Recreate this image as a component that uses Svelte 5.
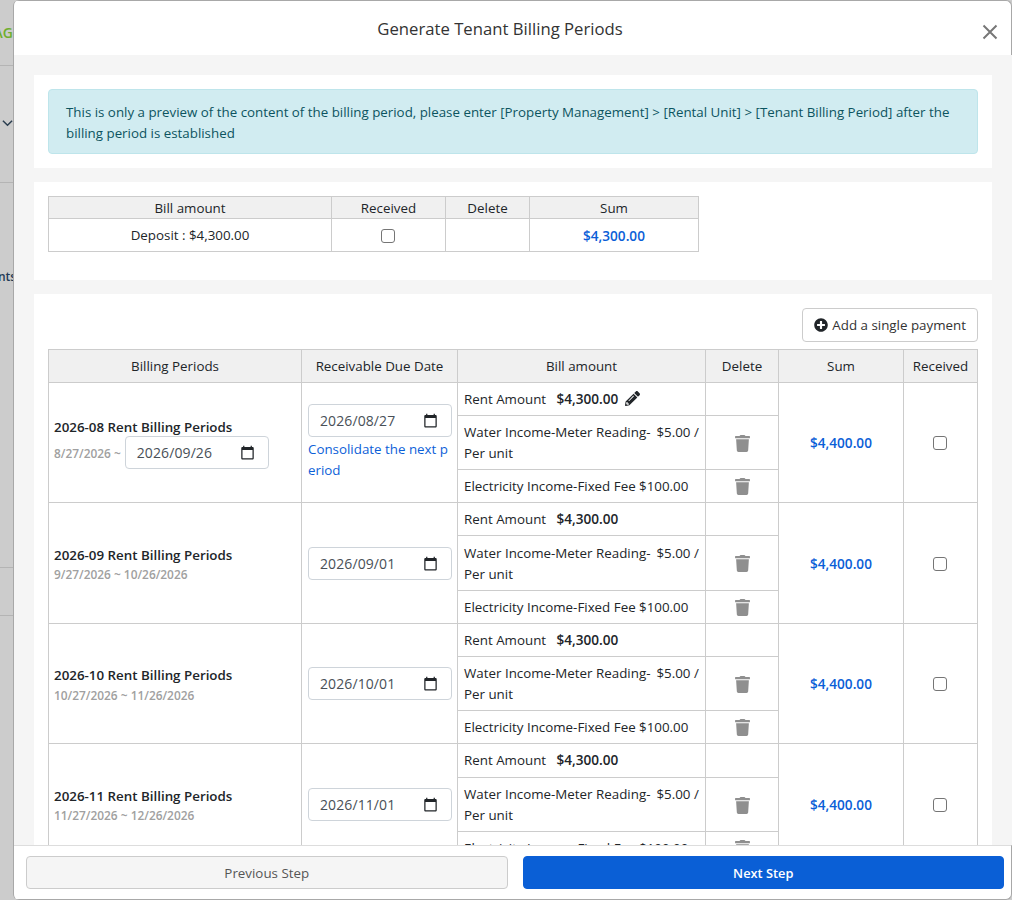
<script>
	const periods = [
		{ title: '2026-08 Rent Billing Periods', from: '8/27/2026', due: '2026/08/27', end: '2026/09/26', first: true },
		{ title: '2026-09 Rent Billing Periods', from: '9/27/2026', to: '10/26/2026', due: '2026/09/01' },
		{ title: '2026-10 Rent Billing Periods', from: '10/27/2026', to: '11/26/2026', due: '2026/10/01' },
		{ title: '2026-11 Rent Billing Periods', from: '11/27/2026', to: '12/26/2026', due: '2026/11/01' }
	]
</script>

{#snippet calendar()}
	<svg class="cal" viewBox="0 0 24 24"><path d="M20 3h-1V1h-2v2H7V1H5v2H4c-1.1 0-2 .9-2 2v16c0 1.1.9 2 2 2h16c1.1 0 2-.9 2-2V5c0-1.1-.9-2-2-2zm0 18H4V8h16v13z" /></svg>
{/snippet}

{#snippet trash()}
	<svg class="trash" viewBox="0 0 448 512"><path d="M432 32H312l-9.4-18.7A24 24 0 0 0 281.1 0H166.8a23.72 23.72 0 0 0-21.4 13.3L136 32H16A16 16 0 0 0 0 48v32a16 16 0 0 0 16 16h416a16 16 0 0 0 16-16V48a16 16 0 0 0-16-16zM53.2 467a48 48 0 0 0 47.9 45h245.8a48 48 0 0 0 47.9-45L416 128H32z" /></svg>
{/snippet}

<div class="page">
	<aside class="behind">
		<div class="nav nav-brand"><span class="brand">AG</span></div>
		<div class="nav nav-menu"><svg class="chev" viewBox="0 0 12 8"><path d="M1 1.5l5 5 5-5" /></svg></div>
		<div class="nav nav-label"><span class="label">nts</span></div>
		<div class="nav nav-gap"></div>
	</aside>

	<section class="modal">
		<header>
			<h2>Generate Tenant Billing Periods</h2>
			<svg class="close" viewBox="0 0 16 16"><path d="M1.5 1.5l13 13M14.5 1.5l-13 13" /></svg>
		</header>

		<div class="body">
			<div class="panel">
				<div class="alert">
					This is only a preview of the content of the billing period, please enter [Property Management] &gt; [Rental Unit] &gt; [Tenant Billing Period] after the billing period is established
				</div>
			</div>

			<div class="panel deposit">
				<table class="small">
					<colgroup>
						<col style="width:283px" />
						<col style="width:114px" />
						<col style="width:84px" />
						<col style="width:169px" />
					</colgroup>
					<thead>
						<tr><th>Bill amount</th><th>Received</th><th>Delete</th><th>Sum</th></tr>
					</thead>
					<tbody>
						<tr>
							<td class="center">Deposit : $4,300.00</td>
							<td class="center"><input type="checkbox" /></td>
							<td></td>
							<td class="center sum">$4,300.00</td>
						</tr>
					</tbody>
				</table>
			</div>

			<div class="panel list">
				<div class="actions">
					<button class="add">
						<svg viewBox="0 0 512 512"><path d="M256 8C119 8 8 119 8 256s111 248 248 248 248-111 248-248S393 8 256 8zm144 276c0 6.6-5.4 12-12 12h-92v92c0 6.6-5.4 12-12 12h-56c-6.6 0-12-5.4-12-12v-92h-92c-6.6 0-12-5.4-12-12v-56c0-6.6 5.4-12 12-12h92v-92c0-6.6 5.4-12 12-12h56c6.6 0 12 5.4 12 12v92h92c6.6 0 12 5.4 12 12v56z" /></svg>
						Add a single payment
					</button>
				</div>
				<table class="periods">
					<colgroup>
						<col style="width:253px" />
						<col style="width:156px" />
						<col style="width:248px" />
						<col style="width:73px" />
						<col style="width:125px" />
						<col style="width:74px" />
					</colgroup>
					<thead>
						<tr>
							<th>Billing Periods</th>
							<th>Receivable Due Date</th>
							<th>Bill amount</th>
							<th>Delete</th>
							<th>Sum</th>
							<th>Received</th>
						</tr>
					</thead>
					<tbody>
						{#each periods as p, i}
							<tr>
								<td rowspan="3" class="period" class:first={p.first}>
									<strong>{p.title}</strong>
									{#if p.first}
										<div class="range">
											<span>{p.from} ~</span>
											<span class="date">{p.end}{@render calendar()}</span>
										</div>
									{:else}
										<div class="range">{p.from} ~ {p.to}</div>
									{/if}
								</td>
								<td rowspan="3" class="due">
									<span class="date">{p.due}{@render calendar()}</span>
									{#if p.first}
										<a class="merge" href="#top">Consolidate the next period</a>
									{/if}
								</td>
								<td class="rent" class:tall={i === 3} class:nudge={i === 1}>
									Rent Amount <strong>$4,300.00</strong>
									{#if p.first}
										<svg class="pencil" viewBox="0 0 512 512"><path d="M497.9 142.1l-46.1 46.1c-4.7 4.7-12.3 4.7-17 0l-111-111c-4.7-4.7-4.7-12.3 0-17l46.1-46.1c18.7-18.7 49.1-18.7 67.9 0l60.1 60.1c18.8 18.7 18.8 49.1 0 67.9zM284.2 99.8L21.6 362.4.4 483.9c-2.9 16.4 11.4 30.6 27.8 27.8l121.5-21.3 262.6-262.6c4.7-4.7 4.7-12.3 0-17l-111-111c-4.8-4.7-12.4-4.7-17.1 0zM124.1 339.9c-5.5-5.5-5.5-14.3 0-19.8l154-154c5.5-5.5 14.3-5.5 19.8 0s5.5 14.3 0 19.8l-154 154c-5.5 5.5-14.3 5.5-19.8 0zM88 424h48v36.3l-64.5 11.3-31.1-31.1L51.7 376H88v48z" /></svg>
									{/if}
								</td>
								<td></td>
								<td rowspan="3" class="center sum">$4,400.00</td>
								<td rowspan="3" class="center"><input type="checkbox" /></td>
							</tr>
							<tr>
								<td class="water" class:tall={i === 1}>Water Income-Meter Reading- <span class="price">$5.00 /</span> Per unit</td>
								<td class="center">{@render trash()}</td>
							</tr>
							<tr>
								<td class:nudge={i !== 1}>Electricity Income-Fixed Fee $100.00</td>
								<td class="center">{@render trash()}</td>
							</tr>
						{/each}
					</tbody>
				</table>
			</div>
		</div>

		<footer>
			<button class="prev">Previous Step</button>
			<button class="next">Next Step</button>
		</footer>
	</section>
</div>

<style>
	:global(body) {
		overflow: hidden;
		background: #ccc;
	}
	.page {
		display: flex;
		height: 900px;
		font-family: 'Open Sans', 'Noto Sans', sans-serif;
		font-size: 13.35px;
		line-height: 21px;
		color: #212529;
	}
	.behind {
		width: 13px;
		flex: none;
		overflow: hidden;
	}
	.nav {
		width: 13px;
		display: flex;
		border-bottom: 1px solid #b4b4b4;
		box-sizing: border-box;
	}
	.nav-brand {
		height: 66px;
		padding-top: 22px;
		justify-content: flex-end;
	}
	.brand {
		color: #6fae2c;
		font-weight: 600;
		font-size: 14px;
	}
	.nav-menu {
		height: 117px;
		padding-top: 53px;
		justify-content: flex-end;
	}
	.chev {
		width: 11px;
		height: 8px;
		flex: none;
		fill: none;
		stroke: #2b3e50;
		stroke-width: 1.6;
	}
	.nav-label {
		height: 385px;
		padding-top: 83px;
	}
	.label {
		margin-left: -2px;
		color: #1f3a56;
		font-weight: 600;
		font-size: 12px;
		white-space: nowrap;
		height: 21px;
	}
	.nav-gap {
		height: 48px;
	}
	.modal {
		flex: 1;
		display: flex;
		flex-direction: column;
		border-left: 1px solid #a8a8a8;
		border-radius: 6px 0 0 6px;
		box-sizing: border-box;
		overflow: hidden;
		min-width: 0;
	}
	header {
		height: 55px;
		box-sizing: border-box;
		flex: none;
		position: relative;
		display: flex;
		align-items: center;
		justify-content: center;
		padding-right: 25px;
		background: #fff;
		border-top: 1px solid #a8a8a8;
		border-right: 1px solid #a8a8a8;
		border-top-right-radius: 6px;
	}
	h2 {
		margin: 0;
		font-size: 16.7px;
		font-weight: 400;
		color: #333;
	}
	.close {
		position: absolute;
		top: 23px;
		right: 13px;
		width: 16px;
		height: 16px;
		fill: none;
		stroke: #777;
		stroke-width: 2;
	}
	.body {
		flex: 1;
		min-height: 0;
		overflow: hidden;
		background: #f5f5f5;
		padding: 20px 20px 0;
		display: flex;
		flex-direction: column;
		gap: 14px;
	}
	.panel {
		flex: none;
		background: #fff;
		padding: 14px;
	}
	.deposit {
		height: 98px;
		box-sizing: border-box;
	}
	.alert {
		background: #d1ecf1;
		border: 1px solid #bee5eb;
		border-radius: 4px;
		color: #0c5460;
		font-size: 13.33px;
		padding: 12px 17px 9px;
	}
	table {
		border-collapse: collapse;
		table-layout: fixed;
	}
	.small {
		width: 650px;
	}
	.periods {
		width: 929px;
	}
	th,
	td {
		border: 1px solid #ccc;
		padding: 5.5px 6px;
		font-weight: 400;
	}
	th {
		background: #f0f0f0;
		text-align: center;
	}
	.small th {
		padding: 1px 6px 0;
		line-height: 20px;
	}
	.center {
		text-align: center;
	}
	.sum {
		color: #0b5ed7;
		font-weight: 600;
		font-size: 13.6px;
	}
	.deposit td {
		height: 20px;
	}
	input[type='checkbox'] {
		appearance: none;
		width: 14px;
		height: 14px;
		margin: 0 2px 0 0;
		display: inline-block;
		vertical-align: middle;
		background: #fff;
		border: 1px solid #757575;
		border-radius: 3px;
	}
	.actions {
		display: flex;
		justify-content: flex-end;
		margin-bottom: 7px;
	}
	.add {
		display: flex;
		align-items: center;
		gap: 4px;
		height: 34px;
		padding: 0 11px;
		font: inherit;
		color: #333;
		background: #fff;
		border: 1px solid #ccc;
		border-radius: 4px;
	}
	.add svg {
		width: 14px;
		height: 14px;
		fill: #212529;
	}
	.period {
		vertical-align: middle;
		padding-left: 5px;
		padding-top: 7.5px;
	}
	.period.first {
		padding-top: 6.5px;
	}
	.period strong {
		display: block;
		font-weight: 600;
	}
	.range {
		display: flex;
		align-items: center;
		gap: 4px;
		margin-top: -0.5px;
		font-size: 11.9px;
		font-weight: 600;
		color: #a0a0a0;
		line-height: 18px;
	}
	.first .range {
		margin-top: -1.5px;
	}
	.date {
		box-sizing: border-box;
		width: 144px;
		height: 33px;
		display: flex;
		align-items: center;
		justify-content: space-between;
		padding: 0 13px 0 11px;
		background: #fff;
		border: 1px solid #ced4da;
		border-radius: 4px;
		color: #495057;
		font-size: 14px;
		font-weight: 400;
		letter-spacing: 0.1px;
	}
	.cal {
		width: 15px;
		height: 15px;
		fill: #212529;
		flex: none;
	}
	.due {
		vertical-align: middle;
	}
	.merge {
		display: block;
		margin-top: 2px;
		color: #0d5fd8;
		text-decoration: none;
		word-break: break-all;
	}
	.rent strong {
		margin-left: 7px;
		font-weight: 600;
		font-size: 13.6px;
		line-height: 1;
	}
	.rent.tall {
		padding-top: 6px;
		padding-bottom: 6px;
	}
	.nudge {
		padding-top: 6px;
		padding-bottom: 5px;
	}
	.water {
		padding-right: 2px;
	}
	.water.tall {
		padding-top: 6.5px;
		padding-bottom: 5.5px;
	}
	.price {
		margin-left: 2.5px;
	}
	.pencil {
		width: 15px;
		height: 15px;
		margin-left: 3px;
		vertical-align: -2px;
		fill: #212529;
	}
	.trash {
		width: 15px;
		height: 17px;
		display: inline-block;
		vertical-align: middle;
		fill: #8f8f8f;
	}
	footer {
		flex: none;
		height: 55px;
		box-sizing: border-box;
		display: flex;
		gap: 15px;
		padding: 10px 7px 10px 12px;
		background: #fff;
		border-top: 1px solid #ddd;
		border-right: 1px solid #a8a8a8;
		border-bottom: 1px solid #a8a8a8;
		border-bottom-right-radius: 6px;
	}
	footer button {
		flex: 1;
		height: 33px;
		padding-top: 2px;
		font: inherit;
		font-size: 13.35px;
		border-radius: 4px;
	}
	.prev {
		background: #f5f5f5;
		border: 1px solid #ccc;
		color: #555;
	}
	.next {
		background: #0a5fd6;
		border: 1px solid #0a5fd6;
		color: #fff;
		font-weight: 600;
		font-size: 12.8px;
	}
</style>
